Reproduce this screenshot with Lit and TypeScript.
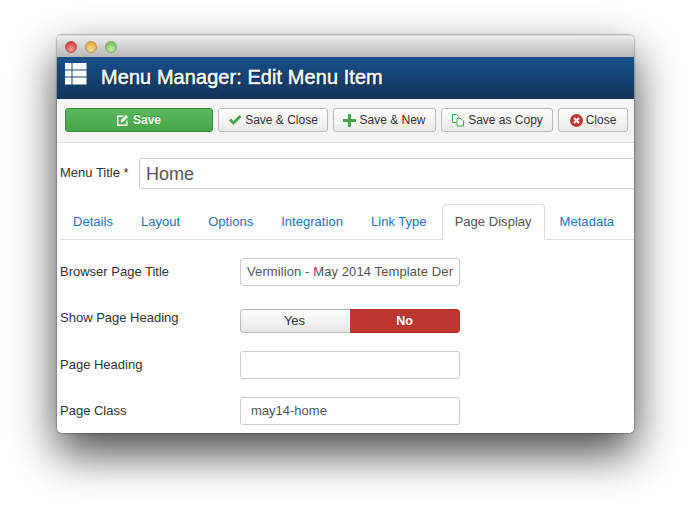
import { LitElement, css, html } from 'lit'
import { customElement } from 'lit/decorators.js'

@customElement('app-root')
export class AppRoot extends LitElement {
  static styles = css`
    :host {
      display: block;
      width: 691px;
      height: 512px;
      background: #fff;
      overflow: hidden;
      font-family: "Liberation Sans", Arial, sans-serif;
      font-size: 13px;
      color: #333;
      padding: 35px 0 0 57px;
      box-sizing: border-box;
    }
    .window {
      width: 577px;
      height: 398px;
      border-radius: 5px;
      overflow: hidden;
      background: #fff;
      box-sizing: border-box;
    }
    .shadow {
      width: 577px;
      height: 398px;
      border-radius: 5px;
      box-shadow: 0 20px 45px rgba(0, 0, 0, 0.72), 0 0 2px rgba(0, 0, 0, 0.7);
    }
    .titlebar {
      height: 22px;
      box-sizing: border-box;
      background: linear-gradient(#ececec, #b8b8b8);
      border-top: 1px solid #d8d8d8;
      display: flex;
      align-items: center;
      gap: 8px;
      padding-left: 8px;
    }
    .dot {
      width: 12px;
      height: 12px;
      border-radius: 50%;
      box-sizing: border-box;
    }
    .dot.red {
      background: radial-gradient(circle at 50% 75%, #fb9a94, #e0443e 75%);
      border: 1px solid #b9534e;
    }
    .dot.yellow {
      background: radial-gradient(circle at 50% 75%, #fbe09b, #e6a83f 75%);
      border: 1px solid #b8934f;
    }
    .dot.green {
      background: radial-gradient(circle at 50% 75%, #c6ecaa, #7fbf5e 75%);
      border: 1px solid #78a866;
    }
    .header {
      height: 42px;
      background: linear-gradient(#17508a, #14406f 55%, #123459);
      display: flex;
      align-items: center;
      padding-left: 8px;
      gap: 14px;
      color: #fff;
    }
    .header svg {
      display: block;
      margin-top: -8px;
    }
    .header h1 {
      margin: -1px 0 0;
      font-size: 20px;
      font-weight: 400;
      letter-spacing: 0.06px;
      -webkit-text-stroke: 0.5px #fff;
      text-shadow: 1px 1px 1px rgba(0, 0, 0, 0.7);
      white-space: nowrap;
    }
    .toolbar {
      height: 44px;
      box-sizing: border-box;
      background: #f5f5f5;
      border-bottom: 1px solid #dadada;
      display: flex;
      gap: 5px;
      padding: 9px 0 0 8px;
    }
    .btn {
      height: 24px;
      box-sizing: border-box;
      border: 1px solid #bbb;
      border-radius: 3px;
      background: linear-gradient(#fff, #e9e9e9);
      display: flex;
      align-items: center;
      justify-content: center;
      gap: 3px;
      font-size: 12px;
      color: #333;
      white-space: nowrap;
    }
    .btn.primary {
      background: linear-gradient(#5cb85c, #47a447);
      border-color: #3d8b3d;
      color: #fff;
      font-weight: 700;
      text-shadow: 0 -1px 0 rgba(0, 0, 0, 0.2);
      gap: 4px;
    }
    .content {
      padding-left: 3px;
    }
    .title-row {
      display: flex;
      align-items: center;
      height: 31px;
      margin-top: 15px;
      white-space: nowrap;
    }
    .title-row label {
      width: 79px;
      flex: none;
      margin-top: -3px;
    }
    .title-input {
      flex: none;
      width: 520px;
      height: 31px;
      box-sizing: border-box;
      border: 1px solid #ccc;
      border-radius: 3px;
      padding-left: 6px;
      font-size: 18px;
      line-height: 30px;
      color: #555;
    }
    .tabs {
      margin-top: 15px;
      height: 36px;
      box-sizing: border-box;
      border-bottom: 1px solid #ddd;
      display: flex;
      padding-left: 13px;
      white-space: nowrap;
      letter-spacing: 0.03px;
    }
    .tab {
      color: #1b75bb;
      height: 35px;
      line-height: 35px;
      padding-right: 28px;
    }
    .tab.active {
      color: #555;
      height: 36px;
      box-sizing: border-box;
      background: #fff;
      border: 1px solid #ddd;
      border-bottom-color: #fff;
      border-radius: 4px 4px 0 0;
      line-height: 33px;
      padding: 0 12px;
      margin: 0 15px 0 -13px;
    }
    .fields {
      display: flex;
      flex-direction: column;
      padding-top: 18px;
    }
    .row {
      display: flex;
      height: 28px;
      margin-bottom: 18px;
    }
    .row label {
      width: 180px;
      flex: none;
      line-height: 27px;
    }
    .row.toggle-row {
      height: 24px;
      margin: 5px 0 18px;
    }
    .row.toggle-row label {
      line-height: 18px;
    }
    .input {
      width: 220px;
      height: 28px;
      box-sizing: border-box;
      border: 1px solid #ccc;
      border-radius: 3px;
      line-height: 26px;
      padding-left: 6px;
      color: #555;
      overflow: hidden;
      white-space: nowrap;
      letter-spacing: 0.1px;
    }
    .input.pad {
      padding-left: 10px;
      letter-spacing: 0;
    }
    .toggle {
      display: flex;
      width: 220px;
      height: 24px;
    }
    .toggle div {
      width: 110px;
      box-sizing: border-box;
      text-align: center;
      line-height: 22px;
    }
    .yes {
      border: 1px solid #bbb;
      border-right: none;
      border-radius: 4px 0 0 4px;
      background: linear-gradient(#fff, #e6e6e6);
      color: #333;
      padding-right: 2px;
    }
    .no {
      border: 1px solid #a9302a;
      border-left: none;
      border-radius: 0 4px 4px 0;
      background: #bd362f;
      color: #fff;
      font-weight: 700;
      font-size: 12.5px;
    }
  `

  render() {
    return html`
      <div class="shadow">
        <div class="window">
          <div class="titlebar">
            <div class="dot red"></div>
            <div class="dot yellow"></div>
            <div class="dot green"></div>
          </div>
          <div class="header">
            <svg width="22" height="22" viewBox="0 0 22 22" fill="#fff">
              <rect x="0" y="0" width="6.500" height="6.500"></rect>
              <rect x="7.500" y="0" width="14" height="6.500"></rect>
              <rect x="0" y="7.500" width="6.500" height="6"></rect>
              <rect x="7.500" y="7.500" width="14" height="6"></rect>
              <rect x="0" y="14.500" width="6.500" height="7"></rect>
              <rect x="7.500" y="14.500" width="14" height="7"></rect>
            </svg>
            <h1>Menu Manager: Edit Menu Item</h1>
          </div>
          <div class="toolbar">
            <div class="btn primary" style="width:148px">
              <svg width="12" height="12" viewBox="0 0 12 12">
                <path d="M0 1.500h7l-1.500 1.500h-4v7.500h7.500v-3l1.500-1.500v6h-10.500z" fill="#fff"></path>
                <path d="M4 6l5-5 2 2-5 5-2.500.5z" fill="#fff"></path>
              </svg>
              Save
            </div>
            <div class="btn" style="width:110px">
              <svg width="14" height="12" viewBox="0 0 14 12">
                <path d="M1 6.500l2-2 2.500 2.500 6-6 2 2-8 8z" fill="#47a447"></path>
              </svg>
              Save &amp; Close
            </div>
            <div class="btn" style="width:103px">
              <svg width="13" height="13" viewBox="0 0 13 13">
                <path d="M5 0h3v5h5v3h-5v5h-3v-5h-5v-3h5z" fill="#47a447"></path>
              </svg>
              Save &amp; New
            </div>
            <div class="btn" style="width:112px">
              <svg width="14" height="13" viewBox="0 0 14 13" fill="none" stroke="#47a447">
                <path d="M1.500 .5h4l2 2v6h-6z" fill="#fff"></path>
                <path d="M6 4.500h4l2.500 2.500v5h-6.500z" fill="#fff"></path>
              </svg>
              Save as Copy
            </div>
            <div class="btn" style="width:70px">
              <svg width="13" height="13" viewBox="0 0 13 13">
                <circle cx="6.500" cy="6.500" r="6.500" fill="#bd362f"></circle>
                <path d="M4 4l5 5M9 4l-5 5" stroke="#fff" stroke-width="2"></path>
              </svg>
              Close
            </div>
          </div>
          <div class="content">
            <div class="title-row">
              <label>Menu Title *</label>
              <div class="title-input">Home</div>
            </div>
            <div class="tabs">
              <div class="tab">Details</div>
              <div class="tab">Layout</div>
              <div class="tab">Options</div>
              <div class="tab">Integration</div>
              <div class="tab">Link Type</div>
              <div class="tab active">Page Display</div>
              <div class="tab">Metadata</div>
            </div>
            <div class="fields">
              <div class="row">
                <label>Browser Page Title</label>
                <div class="input">Vermilion - May 2014 Template Der</div>
              </div>
              <div class="row toggle-row">
                <label>Show Page Heading</label>
                <div class="toggle">
                  <div class="yes">Yes</div>
                  <div class="no">No</div>
                </div>
              </div>
              <div class="row">
                <label>Page Heading</label>
                <div class="input"></div>
              </div>
              <div class="row">
                <label>Page Class</label>
                <div class="input pad">may14-home</div>
              </div>
            </div>
          </div>
        </div>
      </div>
    `
  }
}
